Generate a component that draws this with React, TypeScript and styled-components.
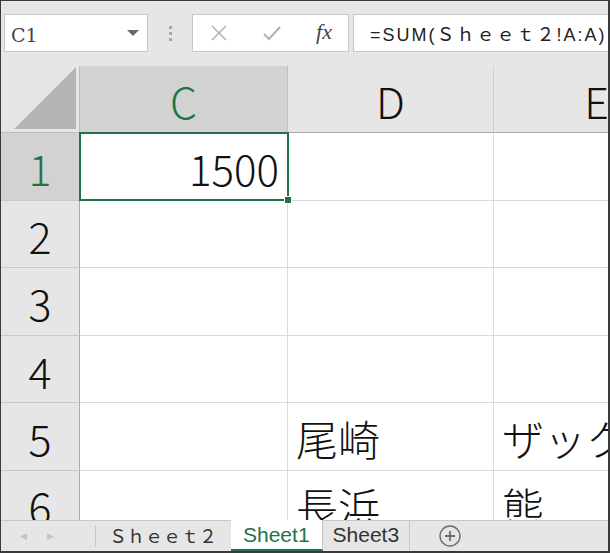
import React from "react";
import styled, { createGlobalStyle } from "styled-components";

const GlobalStyle = createGlobalStyle`
  html, body {
    margin: 0;
    padding: 0;
    background: #fff;
  }
  * {
    box-sizing: border-box;
  }
`;

const GREEN = "#217346";
const CJK = `"Noto Sans CJK JP", "Noto Sans", sans-serif`;

const columns = ["C", "D", "E"];
const rows = [
  { n: 1, cells: ["1500", "", ""] },
  { n: 2, cells: ["", "", ""] },
  { n: 3, cells: ["", "", ""] },
  { n: 4, cells: ["", "", ""] },
  { n: 5, cells: ["", "尾崎", "ザックリ"] },
  { n: 6, cells: ["", "長浜", "熊"] },
];

export default function App() {
  return (
    <>
      <GlobalStyle />
      <Frame>
        <Toolbar>
          <NameBox>
            <NameText>C1</NameText>
            <Caret />
          </NameBox>
          <Dots>
            <i />
            <i />
            <i />
          </Dots>
          <FormulaButtons>
            <svg width="18" height="18" viewBox="0 0 18 18">
              <path d="M2 2 L16 16 M16 2 L2 16" stroke="#b4b4b4" strokeWidth="1.6" fill="none" />
            </svg>
            <svg width="20" height="18" viewBox="0 0 20 18">
              <path d="M2 10 L7 15 L18 3" stroke="#b4b4b4" strokeWidth="2.2" fill="none" />
            </svg>
            <Fx>fx</Fx>
          </FormulaButtons>
          <FormulaInput>=SUM(Ｓｈｅｅｔ２!A:A)</FormulaInput>
        </Toolbar>

        <Sheet>
          <Corner>
            <svg width="62" height="62" viewBox="0 0 62 62">
              <polygon points="62,0 62,62 0,62" fill="#b4b4b4" />
            </svg>
          </Corner>
          {columns.map((c, i) => (
            <ColHeader key={c} selected={i === 0}>
              {c}
            </ColHeader>
          ))}
          {rows.map((r) => (
            <React.Fragment key={r.n}>
              <RowHeader selected={r.n === 1}>{r.n}</RowHeader>
              {r.cells.map((v, i) => (
                <Cell key={i} numeric={/^\d+$/.test(v)} active={r.n === 1 && i === 0}>
                  {v}
                  {r.n === 1 && i === 0 && (
                    <Selection>
                      <Handle />
                    </Selection>
                  )}
                </Cell>
              ))}
            </React.Fragment>
          ))}
        </Sheet>

        <TabBar>
          <NavArrows>
            <Arrow>◀</Arrow>
            <Arrow>▶</Arrow>
          </NavArrows>
          <Tab wide>Ｓｈｅｅｔ２</Tab>
          <Tab active>Sheet1</Tab>
          <Tab last>Sheet3</Tab>
          <AddSheet>
            <svg width="22" height="22" viewBox="0 0 22 22">
              <circle cx="11" cy="11" r="10" stroke="#6b6b6b" strokeWidth="1.4" fill="none" />
              <path d="M11 6 V16 M6 11 H16" stroke="#6b6b6b" strokeWidth="1.8" />
            </svg>
          </AddSheet>
        </TabBar>
      </Frame>
    </>
  );
}

const Frame = styled.div`
  width: 610px;
  height: 553px;
  display: flex;
  flex-direction: column;
  overflow: hidden;
  border-top: 1px solid #3a3a3a;
  border-left: 1px solid #3a3a3a;
  border-right: 2px solid #3a3a3a;
  border-bottom: 2px solid #3a3a3a;
  background: #e6e6e6;
`;

const Toolbar = styled.div`
  height: 65px;
  flex: none;
  display: flex;
  align-items: flex-start;
  padding-top: 13px;
  padding-left: 3px;
  background: #e6e6e6;
`;

const NameBox = styled.div`
  width: 144px;
  height: 38px;
  background: #fff;
  border: 1px solid #c8c8c8;
  display: flex;
  align-items: center;
  justify-content: space-between;
  padding: 0 8px 0 6px;
`;

const NameText = styled.span`
  font-family: "DejaVu Serif", "Liberation Serif", serif;
  font-size: 19px;
  color: #444;
  padding-top: 4px;
`;

const Caret = styled.span`
  width: 0;
  height: 0;
  border-left: 6px solid transparent;
  border-right: 6px solid transparent;
  border-top: 6px solid #6a6a6a;
`;

const Dots = styled.div`
  width: 44px;
  height: 38px;
  display: flex;
  flex-direction: column;
  align-items: center;
  justify-content: center;
  gap: 3px;
  i {
    width: 3px;
    height: 3px;
    background: #a6a6a6;
  }
`;

const FormulaButtons = styled.div`
  width: 157px;
  height: 38px;
  background: #fff;
  border: 1px solid #c8c8c8;
  display: flex;
  align-items: center;
  justify-content: space-between;
  padding: 0 16px 0 17px;
`;

const Fx = styled.span`
  font-family: "Liberation Serif", "DejaVu Serif", serif;
  font-style: italic;
  font-size: 22px;
  color: #444;
  padding-bottom: 2px;
`;

const FormulaInput = styled.div`
  flex: 1;
  height: 38px;
  margin-left: 4px;
  background: #fff;
  border: 1px solid #c8c8c8;
  border-right: none;
  display: flex;
  align-items: center;
  padding-left: 16px;
  white-space: nowrap;
  overflow: hidden;
  font-family: "Liberation Sans", "Noto Sans CJK JP", sans-serif;
  font-size: 18px;
  letter-spacing: 2px;
  color: #222;
`;

const Sheet = styled.div`
  flex: 1;
  display: grid;
  grid-template-columns: 79px 208px 206px 206px;
  grid-template-rows: 67px 68px 67px 68px 67px 68px 68px;
  overflow: hidden;
  background: #fff;
`;

const Corner = styled.div`
  background: #e6e6e6;
  border-right: 1px solid #bdbdbd;
  border-bottom: 1px solid #bdbdbd;
  display: flex;
  align-items: flex-end;
  justify-content: flex-end;
  padding: 0 3px 3px 0;
`;

const ColHeader = styled.div<{ selected?: boolean }>`
  background: ${(p) => (p.selected ? "#d2d2d2" : "#e6e6e6")};
  color: ${(p) => (p.selected ? GREEN : "#111")};
  border-right: 1px solid ${(p) => (p.selected ? "#c0c0c0" : "#d0d0d0")};
  border-bottom: 1px solid #ababab;
  display: flex;
  align-items: center;
  justify-content: center;
  font-family: ${CJK};
  font-weight: 300;
  font-size: 43px;
  line-height: 1;
  padding-top: 2px;
  white-space: nowrap;
  overflow: hidden;
`;

const RowHeader = styled.div<{ selected?: boolean }>`
  background: ${(p) => (p.selected ? "#d2d2d2" : "#e6e6e6")};
  color: ${(p) => (p.selected ? GREEN : "#111")};
  border-right: 1px solid #ababab;
  border-bottom: 1px solid #c8c8c8;
  display: flex;
  align-items: center;
  justify-content: center;
  font-family: ${CJK};
  font-weight: 300;
  font-size: 43px;
  line-height: 1;
  padding-top: 2px;
`;

const Cell = styled.div<{ numeric?: boolean; active?: boolean }>`
  position: relative;
  z-index: ${(p) => (p.active ? 2 : "auto")};
  background: #fff;
  border-right: 1px solid #dadada;
  border-bottom: 1px solid #dadada;
  display: flex;
  align-items: center;
  justify-content: ${(p) => (p.numeric ? "flex-end" : "flex-start")};
  padding: 2px 8px 0 8px;
  font-family: ${CJK};
  font-weight: 300;
  font-size: 42px;
  line-height: 1;
  color: #111;
  white-space: nowrap;
`;

const Selection = styled.div`
  position: absolute;
  left: -1px;
  top: -1px;
  right: -2px;
  bottom: -1px;
  border: 2px solid ${GREEN};
  pointer-events: none;
`;

const Handle = styled.div`
  position: absolute;
  right: -4px;
  bottom: -4px;
  width: 6px;
  height: 6px;
  background: ${GREEN};
  outline: 1px solid #fff;
`;

const TabBar = styled.div`
  height: 31px;
  flex: none;
  display: flex;
  align-items: stretch;
  background: #e6e6e6;
  border-top: 1px solid #c6c6c6;
  position: relative;
  z-index: 3;
`;

const NavArrows = styled.div`
  width: 95px;
  display: flex;
  align-items: center;
  gap: 20px;
  padding-left: 19px;
  border-right: 1px solid #c6c6c6;
  margin: 4px 0;
`;

const Arrow = styled.span`
  font-size: 9px;
  color: #c4c4c4;
  font-family: "DejaVu Sans", sans-serif;
`;

const Tab = styled.div<{ active?: boolean; wide?: boolean; last?: boolean }>`
  display: flex;
  align-items: center;
  padding: 0 ${(p) => (p.wide ? "13px" : p.active ? "12px" : "10px")};
  margin-top: -1px;
  background: ${(p) => (p.active ? "#fff" : "transparent")};
  color: ${(p) => (p.active ? GREEN : "#333")};
  border-bottom: 2px solid ${(p) => (p.active ? GREEN : "transparent")};
  border-right: 1px solid ${(p) => (p.active || p.last ? "#c6c6c6" : "transparent")};
  font-family: ${(p) =>
    p.wide ? `"Noto Sans CJK JP", sans-serif` : `"Liberation Sans", sans-serif`};
  font-size: ${(p) => (p.wide ? "18px" : "21px")};
  white-space: nowrap;
`;

const AddSheet = styled.div`
  display: flex;
  align-items: center;
  padding-left: 29px;
`;
